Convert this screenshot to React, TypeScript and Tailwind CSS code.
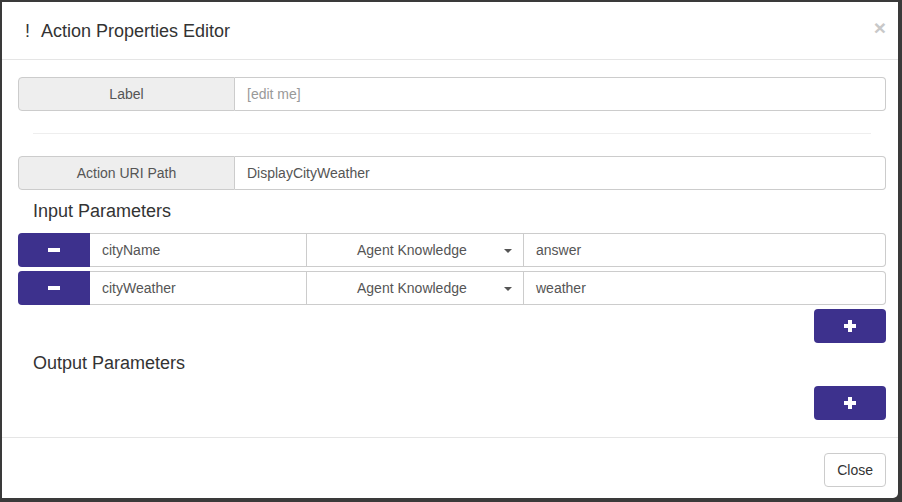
import React from "react";

const PURPLE = "bg-[#3d318d]";

function Minus() {
  return (
    <svg width="12" height="4" viewBox="0 0 12 4">
      <rect x="0" y="0" width="12" height="4" fill="#fff" />
    </svg>
  );
}

function Plus() {
  return (
    <svg width="12" height="12" viewBox="0 0 12 12">
      <rect x="4" y="0" width="4" height="12" fill="#fff" />
      <rect x="0" y="4" width="12" height="4" fill="#fff" />
    </svg>
  );
}

function AddonRow({ label, value, placeholder }: { label: string; value?: string; placeholder?: string }) {
  return (
    <div className="flex h-[34px] text-[14px]">
      <div className="w-[217px] flex items-center justify-center bg-[#eeeeee] border border-[#cccccc] rounded-l-[4px] text-[#555555]">
        {label}
      </div>
      <div className="flex-1 flex items-center px-3 border border-l-0 border-[#cccccc] rounded-r-[4px] bg-white">
        {value ? (
          <span className="text-[#555555]">{value}</span>
        ) : (
          <span className="text-[#999999]">{placeholder}</span>
        )}
      </div>
    </div>
  );
}

function ParamRow({ name, value }: { name: string; value: string }) {
  return (
    <div className="flex h-[34px] text-[14px] text-[#555555]">
      <div className={`w-[72px] ${PURPLE} rounded-l-[4px] flex items-center justify-center`}>
        <Minus />
      </div>
      <div className="w-[217px] flex items-center px-3 border border-l-0 border-[#cccccc]">{name}</div>
      <div className="w-[217px] flex items-center border border-l-0 border-[#cccccc] relative">
        <span className="ml-[50px]">Agent Knowledge</span>
        <span className="absolute left-[197px] top-[15px] w-0 h-0 border-l-[4px] border-r-[4px] border-t-[4px] border-l-transparent border-r-transparent border-t-[#555555]" />
      </div>
      <div className="flex-1 flex items-center px-3 border border-l-0 border-[#cccccc] rounded-r-[4px]">{value}</div>
    </div>
  );
}

export default function App() {
  return (
    <div
      className="w-[902px] h-[502px] bg-[#3a3a3a] pt-[2px] pl-[2px] pr-[4px] pb-[4px]"
      style={{ fontFamily: '"Liberation Sans", Arial, sans-serif' }}
    >
      <div className="w-full h-full bg-white rounded-br-[5px] flex flex-col">
        {/* header */}
        <div className="h-[58px] border-b border-[#e5e5e5] flex items-center pt-[2px] pl-[23px] pr-[12px]">
          <span className="text-[18px] text-[#333333] mr-[11px]">!</span>
          <span className="text-[18px] text-[#333333]">Action Properties Editor</span>
          <span className="ml-auto text-[#c8c8c8] text-[21px] font-bold leading-none -mt-[8px] mr-[0px]">×</span>
        </div>
        {/* body */}
        <div className="pl-[16px] pr-[12px] pt-[17px] flex flex-col">
          <AddonRow label="Label" placeholder="[edit me]" />
          <div className="mx-[15px] mt-[22px] h-px bg-[#eeeeee]" />
          <div className="mt-[22px]">
            <AddonRow label="Action URI Path" value="DisplayCityWeather" />
          </div>
          <div className="mt-[11px] h-[20px] flex items-center pl-[15px] text-[18px] text-[#333333]">Input Parameters</div>
          <div className="mt-[12px] flex flex-col gap-[4px]">
            <ParamRow name="cityName" value="answer" />
            <ParamRow name="cityWeather" value="weather" />
          </div>
          <div className="mt-[4px] flex justify-end">
            <div className={`w-[72px] h-[34px] ${PURPLE} rounded-[4px] flex items-center justify-center`}>
              <Plus />
            </div>
          </div>
          <div className="mt-[10px] h-[20px] flex items-center pl-[15px] text-[18px] text-[#333333]">Output Parameters</div>
          <div className="mt-[13px] flex justify-end">
            <div className={`w-[72px] h-[34px] ${PURPLE} rounded-[4px] flex items-center justify-center`}>
              <Plus />
            </div>
          </div>
        </div>
        {/* footer */}
        <div className="mt-[17px] border-t border-[#e5e5e5] pt-[15px] pr-[12px] flex justify-end">
          <div className="h-[34px] px-[12px] border border-[#cccccc] rounded-[4px] flex items-center text-[14px] text-[#333333]">
            Close
          </div>
        </div>
      </div>
    </div>
  );
}
